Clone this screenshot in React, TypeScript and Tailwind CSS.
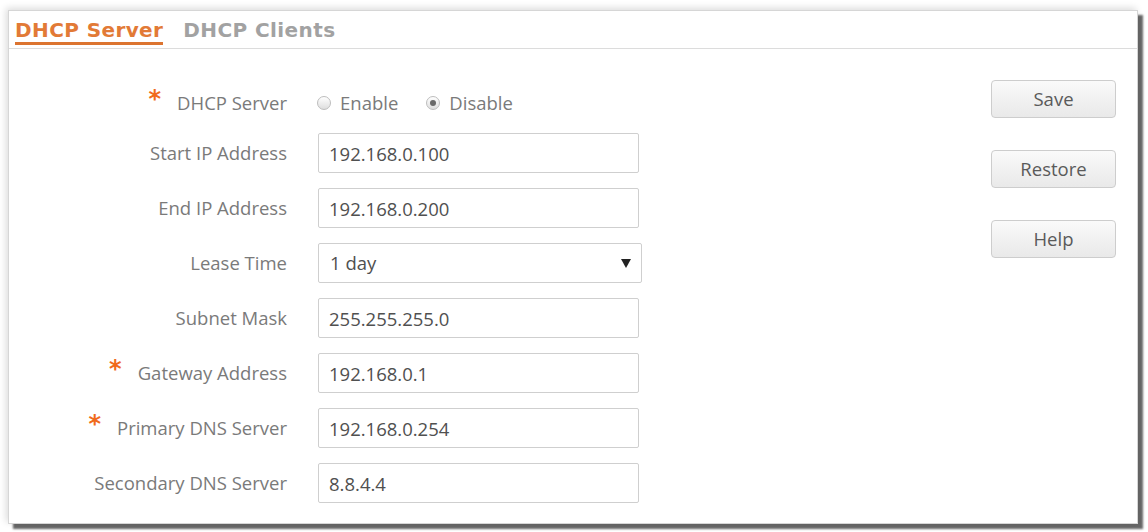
import { useState } from "react";

const fields = [
  { label: "Start IP Address", value: "192.168.0.100" },
  { label: "End IP Address", value: "192.168.0.200" },
  { label: "Lease Time", value: "1 day", select: true },
  { label: "Subnet Mask", value: "255.255.255.0" },
  { label: "Gateway Address", value: "192.168.0.1", required: true },
  { label: "Primary DNS Server", value: "192.168.0.254", required: true },
  { label: "Secondary DNS Server", value: "8.8.4.4" },
];

function Star() {
  return (
    <span className="mr-[16px] -translate-y-[4px] font-['DejaVu_Sans',sans-serif] text-[24px] font-bold leading-none text-[#f06a1c]">
      *
    </span>
  );
}

function Radio({ checked, label, onClick }: { checked: boolean; label: string; onClick: () => void }) {
  return (
    <button type="button" onClick={onClick} className="flex items-center gap-[9px]">
      <span className="flex h-[14px] w-[14px] items-center justify-center rounded-full border border-[#bdbdbd] bg-gradient-to-b from-white to-[#dedede]">
        {checked && <span className="h-[6px] w-[6px] rounded-full bg-[#6a6a6a]" />}
      </span>
      <span>{label}</span>
    </button>
  );
}

export default function App() {
  const [enabled, setEnabled] = useState(false);

  return (
    <div className="h-[532px] w-[1148px] overflow-hidden bg-white pl-[8px] pt-[10px] font-['Open_Sans',sans-serif] text-[18.5px] text-[#7a7a7a]">
      <div className="flex h-[514px] w-[1130px] flex-col border border-[#d6d6d6] bg-white shadow-[5px_5px_2px_rgba(0,0,0,0.6),_-2px_-2px_7px_rgba(0,0,0,0.14)]">
        {/* Tabs */}
        <div className="flex h-[38px] items-start gap-[20px] border-b border-[#dcdcdc] pl-[6px] pt-[7px] font-['DejaVu_Sans',sans-serif] text-[20px] font-bold leading-[24px] tracking-[0.4px]">
          <span className="border-b-[3px] border-[#dc7430] text-[#e27a36]">DHCP Server</span>
          <span className="text-[#a2a2a2]">DHCP Clients</span>
        </div>

        <div className="flex justify-between">
          {/* Form */}
          <div className="flex flex-col pt-[34px]">
            <div className="mb-[10px] flex h-[40px] items-center">
              <div className="flex w-[278px] items-center justify-end">
                <Star />
                <span>DHCP Server</span>
              </div>
              <div className="ml-[30px] flex items-center gap-[28px]">
                <Radio checked={enabled} label="Enable" onClick={() => setEnabled(true)} />
                <Radio checked={!enabled} label="Disable" onClick={() => setEnabled(false)} />
              </div>
            </div>
            <div className="flex flex-col gap-[15px]">
              {fields.map((f) => (
                <div key={f.label} className="flex h-[40px] items-center">
                  <div className="flex w-[278px] items-center justify-end">
                    {f.required && <Star />}
                    <span>{f.label}</span>
                  </div>
                  {f.select ? (
                    <div className="ml-[31px] flex h-[40px] w-[324px] items-center justify-between rounded-[2px] border border-[#cfcfcf] bg-white pl-[11px] pr-[10px] text-[#505050]">
                      <span>{f.value}</span>
                      <svg width="10" height="10" viewBox="0 0 10 10">
                        <polygon points="0,1 10,1 5,10" fill="#222" />
                      </svg>
                    </div>
                  ) : (
                    <input
                      defaultValue={f.value}
                      className="ml-[31px] h-[40px] w-[321px] rounded-[2px] border border-[#cfcfcf] bg-white pl-[10px] text-[#505050] outline-none"
                    />
                  )}
                </div>
              ))}
            </div>
          </div>

          {/* Buttons */}
          <div className="mr-[21px] flex flex-col gap-[32px] pt-[31px]">
            {["Save", "Restore", "Help"].map((b) => (
              <button
                key={b}
                type="button"
                className="h-[38px] w-[125px] rounded-[4px] border border-[#cdcdcd] bg-gradient-to-b from-[#fafafa] to-[#e9e9e9] text-[#5a5a5a]"
              >
                {b}
              </button>
            ))}
          </div>
        </div>
      </div>
    </div>
  );
}
